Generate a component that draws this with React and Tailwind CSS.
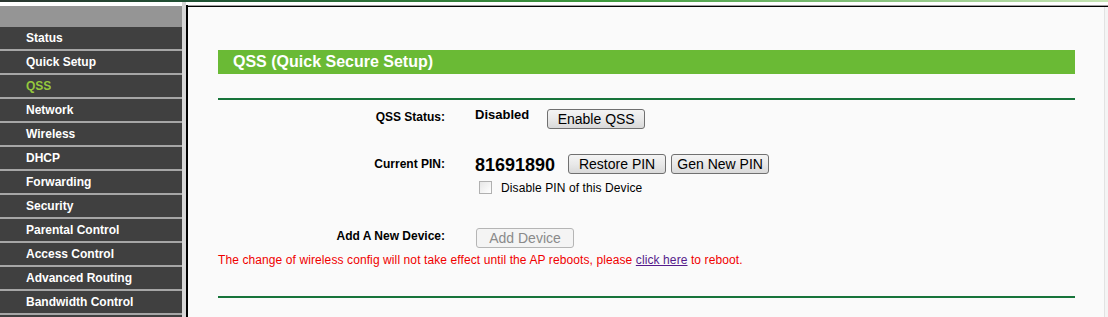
import React from 'react';

const menu = [
  'Status',
  'Quick Setup',
  'QSS',
  'Network',
  'Wireless',
  'DHCP',
  'Forwarding',
  'Security',
  'Parental Control',
  'Access Control',
  'Advanced Routing',
  'Bandwidth Control',
];

function Btn({ children, disabled }) {
  return (
    <button
      disabled={disabled}
      className={
        disabled
          ? 'w-[98px] h-[20px] rounded-[3px] border border-[#b5b5b5] bg-[#f4f4f4] text-[14px] leading-[18px] text-[#8a8a8a]'
          : 'w-[98px] h-[20px] rounded-[3px] border border-[#707070] bg-gradient-to-b from-[#f4f4f4] via-[#e9e9e9] to-[#d9d9d9] text-[14px] leading-[18px] text-black'
      }
    >
      {children}
    </button>
  );
}

export default function App() {
  return (
    <div className="w-[1108px] h-[317px] overflow-hidden flex flex-col bg-white font-['Liberation_Sans',Arial,sans-serif]">
      <div className="h-[2px] shrink-0 bg-[linear-gradient(to_right,#2b3630_0%,#1f5233_18%,#3e9b3d_55%,#c8e6b6_100%)]" />

      <div className="flex flex-1 min-h-0">
        {/* sidebar */}
        <div className="w-[182px] flex flex-col pt-[4px] bg-white overflow-hidden">
          <div className="h-[21px] shrink-0 bg-[#959595]" />
          {menu.map((item) => (
            <div
              key={item}
              className={`h-[24px] shrink-0 bg-[#404040] border-b-2 border-[#a6a6a6] pl-[26px] text-[12px] font-bold leading-[22px] ${
                item === 'QSS' ? 'text-[#95c93d]' : 'text-white'
              }`}
            >
              {item}
            </div>
          ))}
          <div className="flex-1 shrink-0 min-h-[10px] bg-[#404040]" />
        </div>
        <div className="w-[4px] bg-[#d6d6d6]" />
        <div className="w-[2px] mt-[3px] bg-black" />

        {/* content */}
        <div className="flex-1 flex flex-col">
          <div className="h-[3px] bg-white" />
          <div className="h-[1px] bg-[#a0a0a0]" />
          <div className="h-[1px] bg-black" />
          <div className="flex-1 flex bg-[#fafafa]">
            <div className="flex-1 pl-[30px] pr-[29px] flex flex-col">
              <div className="mt-[43px] h-[24px] bg-[#6aba35] pl-[15px] text-[16px] font-bold leading-[24px] text-white">
                QSS (Quick Secure Setup)
              </div>
              <div className="mt-[24px] h-[2px] bg-[#17743a]" />

              <div className="mt-[7px] flex h-[20px]">
                <div className="w-[227px] text-right text-[12px] font-bold leading-[20px] text-black">QSS Status:</div>
                <div className="ml-[30px] text-[13px] font-bold leading-[15px] text-black">Disabled</div>
                <div className="ml-[18px]">
                  <Btn>Enable QSS</Btn>
                </div>
              </div>

              <div className="mt-[27px] flex h-[20px]">
                <div className="w-[227px] text-right text-[12px] font-bold leading-[20px] text-black">Current PIN:</div>
                <div className="ml-[30px] text-[18px] font-bold leading-[22px] text-black">81691890</div>
                <div className="ml-[13px] flex gap-[5px]">
                  <Btn>Restore PIN</Btn>
                  <Btn>Gen New PIN</Btn>
                </div>
              </div>

              <div className="mt-[7px] flex items-center h-[13px]">
                <span className="ml-[261px] w-[13px] h-[13px] border border-[#b0b0b0] bg-gradient-to-br from-[#e6e6e6] to-[#ffffff]" />
                <span className="ml-[9px] text-[12px] leading-[14px] tracking-[0.1px] text-black">Disable PIN of this Device</span>
              </div>

              <div className="mt-[32px] flex h-[20px]">
                <div className="w-[227px] text-right text-[12px] font-bold leading-[20px] text-black">Add A New Device:</div>
                <div className="ml-[31px]">
                  <Btn disabled>Add Device</Btn>
                </div>
              </div>

              <div className="mt-[7px] text-[12px] leading-[14px] tracking-[0.1px] text-[#f00000]">
                The change of wireless config will not take effect until the AP reboots, please{' '}
                <a href="#" className="text-[#551a8b] underline">click here</a> to reboot.
              </div>

              <div className="mt-[29px] h-[2px] bg-[#17743a]" />
            </div>
            <div className="w-[1px] bg-[#e2e2e2]" />
            <div className="w-[3px] bg-[#f4f4f4]" />
          </div>
        </div>
      </div>
    </div>
  );
}
